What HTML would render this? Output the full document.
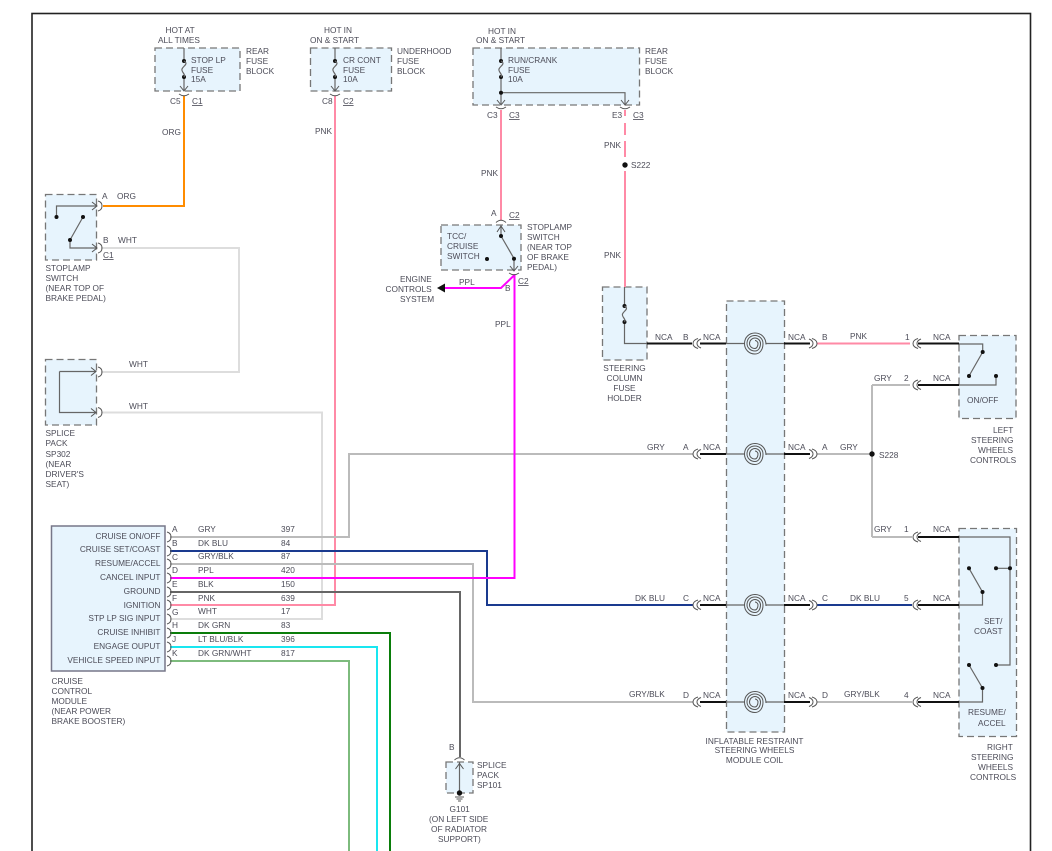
<!DOCTYPE html>
<html>
<head>
<meta charset="utf-8">
<style>
html,body{margin:0;padding:0;background:#fff;width:1052px;height:851px;overflow:hidden}
svg{display:block;filter:blur(.25px)}
text{font-family:"Liberation Sans",sans-serif;font-size:8.3px;fill:#4c4c58}
.b{fill:#e7f4fd;stroke:#777;stroke-width:1.3;stroke-dasharray:7 4}
.w{fill:none;stroke:#666;stroke-width:1.2}
.c{fill:none;stroke:#555;stroke-width:1}
.k{fill:none;stroke:#111;stroke-width:2}
.h{fill:none;stroke-width:2}
.u{text-decoration:underline}
</style>
</head>
<body>
<svg width="1052" height="851" viewBox="0 0 1052 851" xmlns="http://www.w3.org/2000/svg">
<defs>
<g id="cd"><path class="c" d="M-1,-5Q3,-4 3,0Q3,4 -1,5"/></g>
<g id="dl"><path class="c" d="M4,-5Q-1,-3.5 -1,0Q-1,3.5 4,5"/><path class="c" d="M7,-4.5Q3,-3 3,0Q3,3 7,4.5"/></g>
<g id="dr"><path class="c" d="M-4,-5Q1,-3.5 1,0Q1,3.5 -4,5"/><path class="c" d="M-7,-4.5Q-3,-3 -3,0Q-3,3 -7,4.5"/></g>
<g id="ar"><path class="c" d="M-5,-4L0,0L-5,4" stroke-width="1.1"/></g>
<g id="ad"><path class="c" d="M-4,-5L0,0L4,-5"/></g>
<g id="cu"><path class="c" d="M-5,0Q0,3.5 5,0"/></g>
<g id="cp"><path class="c" d="M-5,3Q0,-1.5 5,3"/></g>
<g id="fz"><circle cx="0" cy="0" r="2" fill="#111"/><circle cx="0" cy="16" r="2" fill="#111"/><path fill="none" stroke="#666" stroke-width="1.2" d="M0,0C5,3 -1,5 -2,8C-3,11 2,13 0,16"/></g>
<g id="coil"><path fill="none" stroke="#555" stroke-width="1" d="M11,1C11,-6 6,-10.5 0,-10.5C-6,-10.5 -10.5,-6 -10.5,0C-10.5,6 -6,10.5 0,10.5C5,10.5 8,6 8,0C8,-5 4,-8 0,-8C-5,-8 -8,-4.5 -8,0C-8,4.5 -4,7.5 0,7.5C3.5,7.5 5.5,4 5.5,0C5.5,-3 3,-5.5 0,-5.5C-3,-5.5 -5.5,-3 -5.5,0C-5.5,3 -3,5 0,5C2,5 3,2 3,0C3,-1.5 1.5,-3 0,-3"/></g>
</defs>

<rect x="32" y="13.5" width="998.5" height="860" fill="#fff" stroke="#222" stroke-width="1.6"/>

<!-- blocks -->
<rect class="b" x="155" y="48" width="85" height="43"/>
<rect class="b" x="310.5" y="48" width="81" height="43"/>
<rect class="b" x="473" y="48" width="166.500" height="57"/>
<rect class="b" x="45.500" y="194.500" width="51" height="65.500"/>
<rect class="b" x="45.500" y="359.500" width="51" height="65.500"/>
<rect class="b" x="441" y="225" width="80" height="45"/>
<rect class="b" x="602.500" y="287" width="44.500" height="73"/>
<rect class="b" x="726.500" y="301" width="58" height="431"/>
<rect class="b" x="959" y="335.500" width="57" height="83"/>
<rect class="b" x="959" y="528.500" width="57.500" height="208"/>
<rect class="b" x="446" y="762" width="27" height="31"/>
<rect x="51.500" y="526" width="113.500" height="145" fill="#e7f4fd" stroke="#778" stroke-width="1.500"/>

<!-- colored wires -->
<path class="h" stroke="#7dbb7d" d="M170,661H349V851"/>
<path class="h" stroke="#19e6f0" d="M170,647H377V851"/>
<path class="h" stroke="#0a7d0a" d="M170,633H390V851"/>
<path class="h" stroke="#ddd" d="M101,248H239V372H101"/>
<path class="h" stroke="#ddd" d="M101,412.500H322V619H170"/>
<path class="h" stroke="#ff8aa6" d="M335,96V605H170"/>
<path class="h" stroke="#ff8c00" d="M184,96V206H103"/>
<path class="h" stroke="#bbb" d="M170,537H349V454H693"/>
<path class="h" stroke="#bbb" d="M170,564H473V702H693"/>
<path class="h" stroke="#1a3a8f" d="M170,551H487V605H693"/>
<path class="h" stroke="#666" d="M170,592H460V757"/>
<path class="h" stroke="#ff00ff" d="M170,578H514.500V274M514.500,275L501,288H445"/>
<path d="M437,288L445,283.500V292.500Z" fill="#111"/>
<path class="h" stroke="#ff8aa6" d="M501,110V220"/>
<path class="h" stroke="#ff8aa6" d="M625,110V116M625,123V135M625,141V157M625,171V287"/>
<path class="h" stroke="#ff8aa6" d="M817,343.500H910"/>
<path class="h" stroke="#bbb" d="M817,454H872M872,385V537M872,385H910M872,537H912"/>
<path class="h" stroke="#1a3a8f" d="M817,605H912"/>
<path class="h" stroke="#bbb" d="M817,702H912"/>

<!-- black NCA -->
<path class="k" d="M647,343.500H692M700,343.500H726M784,343.500H810M918,343.500H959"/>
<path class="k" d="M700,454H726M784,454H810M918,385H959"/>
<path class="k" d="M700,605H726M784,605H810M918,537H959M918,605H959"/>
<path class="k" d="M700,702H726M784,702H810M918,702H959"/>

<!-- inner wiring -->
<path class="w" d="M184,48V61M184,77V90M335,48V61M335,77V90M501,48V61M501,77V104M501,92.700H625V104"/>
<path class="w" d="M56.500,217V206H97M70,240V248H97M70,240L83,217"/>
<path class="w" d="M59.500,371.500H96M59.500,371.500V412.500H96"/>
<path class="w" d="M501,225V236L514,258.500V270"/>
<path class="w" d="M624.500,287V306M624.500,322V343.500H647"/>
<path class="w" d="M726,343.500H744M766,343.500H784M726,454H744M766,454H784M726,605H744M766,605H784M726,702H744M766,702H784"/>
<path class="w" d="M959,344H982.700V352L969,376M959,385H996V376"/>
<path class="w" d="M959,537H1010V665H996M1010,568.300H996M969,568.300L982.500,592V605H959M969,665L982.500,688V702H959"/>
<path class="w" d="M459.500,762V793"/>

<!-- dots / fuses -->
<use href="#fz" x="184" y="61"/><use href="#fz" x="335" y="61"/><use href="#fz" x="501" y="61"/><use href="#fz" x="624.500" y="306"/>
<g fill="#111">
<circle cx="501" cy="92.700" r="2"/><circle cx="56.500" cy="217" r="2"/><circle cx="83" cy="217" r="2"/><circle cx="70" cy="240" r="2"/>
<circle cx="501" cy="236" r="2"/><circle cx="514" cy="258.700" r="2"/><circle cx="487" cy="259" r="2"/>
<circle cx="625" cy="165" r="2.700"/><circle cx="872" cy="454" r="2.700"/>
<circle cx="982.700" cy="352" r="2"/><circle cx="969" cy="376" r="2"/><circle cx="996" cy="376" r="2"/>
<circle cx="969" cy="568.300" r="2"/><circle cx="982.500" cy="592" r="2"/><circle cx="996" cy="568.300" r="2"/><circle cx="1010" cy="568.300" r="2"/>
<circle cx="969" cy="665" r="2"/><circle cx="982.500" cy="688" r="2"/><circle cx="996" cy="665" r="2"/>
<circle cx="459.500" cy="793" r="2.700"/>
</g>
<path class="c" d="M455,797H464M456.500,799H462.500M458,801H461"/>

<!-- arrows -->
<use href="#ad" x="184" y="91"/><use href="#ad" x="335" y="91"/><use href="#ad" x="501" y="105"/><use href="#ad" x="625" y="105"/>
<use href="#ad" x="514" y="271"/>
<path class="c" d="M497,232L501,226L505,232M455.500,769L459.500,763.500L463.500,769"/>
<use href="#ar" x="97" y="206"/><use href="#ar" x="97" y="248"/><use href="#ar" x="96" y="371.500"/><use href="#ar" x="96" y="412.500"/>

<!-- connectors -->
<use href="#cu" x="184" y="94"/><use href="#cu" x="335" y="94"/><use href="#cu" x="501" y="107"/><use href="#cu" x="625" y="107"/><use href="#cu" x="514" y="273"/>
<use href="#cp" x="501" y="219.500"/><use href="#cp" x="459.500" y="757"/>
<use href="#cd" x="99" y="206"/><use href="#cd" x="99" y="248"/><use href="#cd" x="99" y="372"/><use href="#cd" x="99" y="412.500"/>
<use href="#cd" x="168" y="537"/><use href="#cd" x="168" y="551"/><use href="#cd" x="168" y="564"/><use href="#cd" x="168" y="578"/><use href="#cd" x="168" y="592"/><use href="#cd" x="168" y="605"/><use href="#cd" x="168" y="619"/><use href="#cd" x="168" y="633"/><use href="#cd" x="168" y="647"/><use href="#cd" x="168" y="661"/>
<use href="#dl" x="694" y="343.500"/><use href="#dl" x="694" y="454"/><use href="#dl" x="694" y="605"/><use href="#dl" x="694" y="702"/>
<use href="#dr" x="816" y="343.500"/><use href="#dr" x="816" y="454"/><use href="#dr" x="816" y="605"/><use href="#dr" x="816" y="702"/>
<use href="#dl" x="914" y="343.500"/><use href="#dl" x="914" y="385"/><use href="#dl" x="914" y="537"/><use href="#dl" x="914" y="605"/><use href="#dl" x="914" y="702"/>

<use href="#coil" x="755" y="343.500"/><use href="#coil" x="755" y="454"/><use href="#coil" x="755" y="605"/><use href="#coil" x="755" y="702"/>

<!-- text -->
<text x="165.500" y="33">HOT AT</text><text x="158" y="43">ALL TIMES</text>
<text x="246" y="54">REAR</text><text x="246" y="64">FUSE</text><text x="246" y="74">BLOCK</text>
<text x="191" y="63">STOP LP</text><text x="191" y="73">FUSE</text><text x="191" y="82">15A</text>
<text x="170" y="104">C5</text><text x="192" y="104" class="u">C1</text>
<text x="162" y="135">ORG</text>

<text x="324" y="33">HOT IN</text><text x="310" y="43">ON &amp; START</text>
<text x="343" y="63">CR CONT</text><text x="343" y="73">FUSE</text><text x="343" y="82">10A</text>
<text x="397" y="54">UNDERHOOD</text><text x="397" y="64">FUSE</text><text x="397" y="74">BLOCK</text>
<text x="322" y="104">C8</text><text x="343" y="104" class="u">C2</text>
<text x="315" y="134">PNK</text>

<text x="488" y="34">HOT IN</text><text x="476" y="43">ON &amp; START</text>
<text x="508" y="63">RUN/CRANK</text><text x="508" y="73">FUSE</text><text x="508" y="82">10A</text>
<text x="645" y="54">REAR</text><text x="645" y="64">FUSE</text><text x="645" y="74">BLOCK</text>
<text x="487" y="118">C3</text><text x="509" y="118" class="u">C3</text>
<text x="612" y="118">E3</text><text x="633" y="118" class="u">C3</text>
<text x="604" y="148">PNK</text><text x="631" y="168">S222</text>
<text x="481" y="176">PNK</text><text x="491" y="216">A</text><text x="509" y="218" class="u">C2</text>
<text x="604" y="258">PNK</text>

<text x="527" y="230">STOPLAMP</text><text x="527" y="240">SWITCH</text><text x="527" y="250">(NEAR TOP</text><text x="527" y="260">OF BRAKE</text><text x="527" y="270">PEDAL)</text>
<text x="447" y="239">TCC/</text><text x="447" y="249">CRUISE</text><text x="447" y="259">SWITCH</text>
<text x="400" y="282">ENGINE</text><text x="385.500" y="292">CONTROLS</text><text x="400" y="302">SYSTEM</text>
<text x="459" y="285">PPL</text><text x="505" y="291">B</text><text x="518" y="284" class="u">C2</text>
<text x="495" y="327">PPL</text>

<text x="102" y="199">A</text><text x="117" y="199">ORG</text>
<text x="103" y="243">B</text><text x="118" y="243">WHT</text><text x="103" y="258" class="u">C1</text>
<text x="45.500" y="271">STOPLAMP</text><text x="45.500" y="281">SWITCH</text><text x="45.500" y="291">(NEAR TOP OF</text><text x="45.500" y="301">BRAKE PEDAL)</text>
<text x="129" y="367">WHT</text><text x="129" y="409">WHT</text>
<text x="45.500" y="436">SPLICE</text><text x="45.500" y="446">PACK</text><text x="45.500" y="457">SP302</text><text x="45.500" y="467">(NEAR</text><text x="45.500" y="477">DRIVER'S</text><text x="45.500" y="487">SEAT)</text>

<g text-anchor="end">
<text x="160.500" y="539">CRUISE ON/OFF</text><text x="160.500" y="552">CRUISE SET/COAST</text><text x="160.500" y="566">RESUME/ACCEL</text><text x="160.500" y="580">CANCEL INPUT</text><text x="160.500" y="594">GROUND</text><text x="160.500" y="608">IGNITION</text><text x="160.500" y="621">STP LP SIG INPUT</text><text x="160.500" y="635">CRUISE INHIBIT</text><text x="160.500" y="649">ENGAGE OUPUT</text><text x="160.500" y="663">VEHICLE SPEED INPUT</text>
</g>
<text x="172" y="532">A</text><text x="172" y="546">B</text><text x="172" y="560">C</text><text x="172" y="573">D</text><text x="172" y="587">E</text><text x="172" y="601">F</text><text x="172" y="615">G</text><text x="172" y="628">H</text><text x="172" y="642">J</text><text x="172" y="656">K</text>
<text x="198" y="532">GRY</text><text x="198" y="546">DK BLU</text><text x="198" y="559">GRY/BLK</text><text x="198" y="573">PPL</text><text x="198" y="587">BLK</text><text x="198" y="601">PNK</text><text x="198" y="614">WHT</text><text x="198" y="628">DK GRN</text><text x="198" y="642">LT BLU/BLK</text><text x="198" y="656">DK GRN/WHT</text>
<text x="281" y="532">397</text><text x="281" y="546">84</text><text x="281" y="559">87</text><text x="281" y="573">420</text><text x="281" y="587">150</text><text x="281" y="601">639</text><text x="281" y="614">17</text><text x="281" y="628">83</text><text x="281" y="642">396</text><text x="281" y="656">817</text>
<text x="51.500" y="684">CRUISE</text><text x="51.500" y="694">CONTROL</text><text x="51.500" y="704">MODULE</text><text x="51.500" y="714">(NEAR POWER</text><text x="51.500" y="724">BRAKE BOOSTER)</text>

<g text-anchor="middle">
<text x="624.500" y="371">STEERING</text><text x="624.500" y="381">COLUMN</text><text x="624.500" y="391">FUSE</text><text x="624.500" y="401">HOLDER</text>
<text x="754.500" y="744">INFLATABLE RESTRAINT</text><text x="754.500" y="753">STEERING WHEELS</text><text x="754.500" y="763">MODULE COIL</text>
</g>
<text x="655" y="340">NCA</text><text x="683" y="340">B</text><text x="703" y="340">NCA</text><text x="788" y="340">NCA</text><text x="822" y="340">B</text><text x="850" y="339">PNK</text><text x="905" y="340">1</text><text x="933" y="340">NCA</text>
<text x="874" y="381">GRY</text><text x="904" y="381">2</text><text x="933" y="381">NCA</text>
<text x="647" y="450">GRY</text><text x="683" y="450">A</text><text x="703" y="450">NCA</text><text x="788" y="450">NCA</text><text x="822" y="450">A</text><text x="840" y="450">GRY</text><text x="879" y="458">S228</text>
<text x="967" y="403">ON/OFF</text>
<text x="993" y="433">LEFT</text><text x="971" y="443">STEERING</text><text x="978" y="453">WHEELS</text><text x="970" y="463">CONTROLS</text>
<text x="874" y="532">GRY</text><text x="904" y="532">1</text><text x="933" y="532">NCA</text>
<text x="635" y="601">DK BLU</text><text x="683" y="601">C</text><text x="703" y="601">NCA</text><text x="788" y="601">NCA</text><text x="822" y="601">C</text><text x="850" y="601">DK BLU</text><text x="904" y="601">5</text><text x="933" y="601">NCA</text>
<text x="984" y="624">SET/</text><text x="974" y="634">COAST</text>
<text x="629" y="697">GRY/BLK</text><text x="683" y="698">D</text><text x="703" y="698">NCA</text><text x="788" y="698">NCA</text><text x="822" y="698">D</text><text x="844" y="697">GRY/BLK</text><text x="904" y="698">4</text><text x="933" y="698">NCA</text>
<text x="968" y="715">RESUME/</text><text x="978" y="726">ACCEL</text>
<text x="987" y="750">RIGHT</text><text x="971" y="760">STEERING</text><text x="978" y="770">WHEELS</text><text x="970" y="780">CONTROLS</text>
<text x="449" y="750">B</text>
<text x="477" y="768">SPLICE</text><text x="477" y="778">PACK</text><text x="477" y="788">SP101</text>
<text x="449.500" y="812">G101</text><text x="429" y="822">(ON LEFT SIDE</text><text x="431" y="832">OF RADIATOR</text><text x="438" y="842">SUPPORT)</text>
</svg>
</body>
</html>
